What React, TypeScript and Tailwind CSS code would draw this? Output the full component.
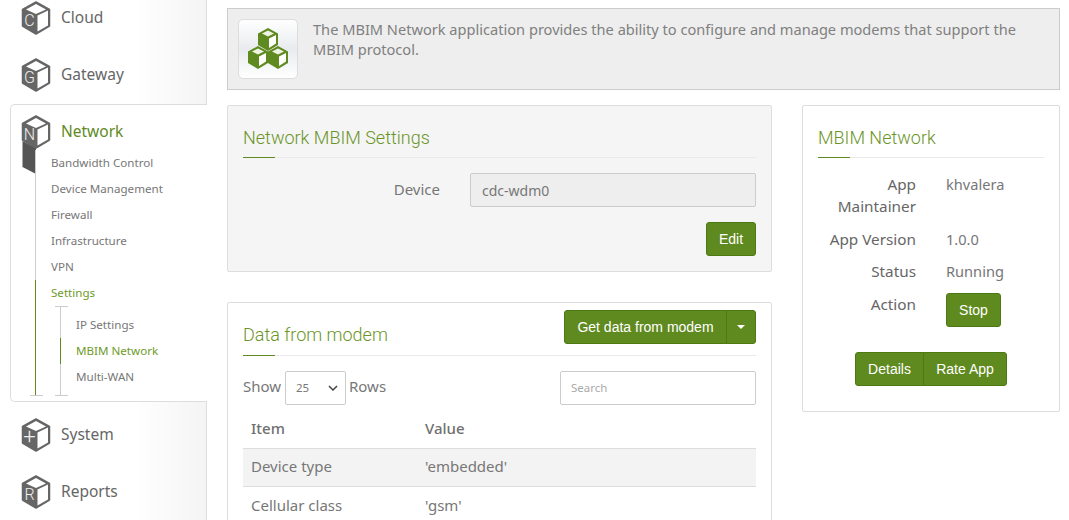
const body = "font-['Noto_Sans',sans-serif]";

function Cube({ letter, tail }: { letter: string; tail?: boolean }) {
    return (
        <svg width="30" height={tail ? 60 : 34} viewBox={tail ? "0 0 30 60" : "0 0 30 34"} className="shrink-0">
            {tail && <path d="M1.5 26 L15 33 L15 59 L1.5 52 Z" fill="#555" />}
            <path d="M15 1 L28.5 8.5 L28.5 25 L15 33 L1.5 25 L1.5 8.5 Z" fill="#666" stroke="#666" strokeWidth="1.5" strokeLinejoin="round" />
            <path d="M15 3 L25 8.5 L15 13 L5 8.5 Z" fill="#fff" />
            <path d="M16.5 14.5 L27 9.5 L27 24.5 L16.5 30.5 Z" fill="#fff" />
            <text x="8.5" y={letter === "+" ? 26 : 25} textAnchor="middle" fontSize={letter === "+" ? 22 : 16} fill="#eee" fontWeight="300" fontFamily="Roboto, sans-serif">
                {letter}
            </text>
        </svg>
    );
}

function MenuItem({ letter, label, className }: { letter: string; label: string; className?: string }) {
    return (
        <div className={`flex items-center gap-[10px] pl-[21px] border-r border-[#ddd] bg-gradient-to-r from-white from-[65%] to-[#f4f4f4] ${className ?? "h-[57px]"}`}>
            <Cube letter={letter} />
            <span className="text-[15.5px] text-[#666]">{label}</span>
        </div>
    );
}

function GreenBtn({ children, className }: { children: React.ReactNode; className?: string }) {
    return (
        <button className={`h-[34px] bg-[#5f8a1f] border border-[#4c7a12] text-white text-[14px] font-['Liberation_Sans',sans-serif] ${className ?? ""}`}>
            {children}
        </button>
    );
}

function CardTitle({ children }: { children: React.ReactNode }) {
    return (
        <div className="relative border-b border-[#eaeaea]">
            <h2 className="font-['Roboto',sans-serif] font-light text-[18px] leading-[26px] text-[#6b9428] pb-[6px]">{children}</h2>
            <div className="absolute left-0 -bottom-px w-8 h-px bg-[#5f8a1f]" />
        </div>
    );
}

function NavLink({ label, active }: { label: string; active?: boolean }) {
    return (
        <div className={`h-[26px] flex items-center -ml-px border-l pl-[15px] text-[11.6px] ${active ? "border-[#5f8a1f] text-[#6e9a2a]" : "border-transparent text-[#777]"}`}>
            {label}
        </div>
    );
}

function Sidebar() {
    return (
        <aside className="w-[207px] shrink-0 -mt-[11px]">
            <MenuItem letter="C" label="Cloud" />
            <MenuItem letter="G" label="Gateway" className="h-[58px]" />
            <div className="ml-[10px] h-[298px] bg-white border border-r-0 border-[#ddd] rounded-l-[5px] pl-[10px] pt-[10px]">
                <div className="flex items-start gap-[10px] h-[34px]">
                    <Cube letter="N" tail />
                    <span className="text-[15.5px] text-[#5f8a1f] mt-[5px]">Network</span>
                </div>
                <div className="relative ml-[14px] border-l border-[#ccc] h-[246px] mt-[1px]">
                    <NavLink label="Bandwidth Control" />
                    <NavLink label="Device Management" />
                    <NavLink label="Firewall" />
                    <NavLink label="Infrastructure" />
                    <NavLink label="VPN" />
                    <div className="-ml-px border-l border-[#5f8a1f] h-[116px]">
                        <div className="h-[26px] flex items-center pl-[15px] text-[11.6px] text-[#6e9a2a]">Settings</div>
                        <div className="relative ml-[24px] h-[90px] border-l border-[#ccc] pt-[6px]">
                            <div className="absolute -left-[6px] top-0 w-[13px] h-px bg-[#ccc]" />
                            <NavLink label="IP Settings" />
                            <NavLink label="MBIM Network" active />
                            <NavLink label="Multi-WAN" />
                            <div className="absolute -left-[6px] bottom-0 w-[13px] h-px bg-[#ccc]" />
                        </div>
                    </div>
                    <div className="absolute -left-[6px] bottom-0 w-[13px] h-px bg-[#ccc]" />
                </div>
            </div>
            <MenuItem letter="+" label="System" className="h-[61px] pt-[4px]" />
            <MenuItem letter="R" label="Reports" className="h-[68px] pb-[10px]" />
        </aside>
    );
}

function AppLogo() {
    const cube = (x: number, y: number) => (
        <g transform={`translate(${x} ${y})`}>
            <path d="M10 0 L20 5.5 L20 17 L10 23 L0 17 L0 5.5 Z" fill="#5f8a1f" />
            <path d="M10 2.5 L16 5.5 L10 8.5 L4 5.5 Z" fill="#eef3e4" />
            <path d="M11 10.5 L18 7 L18 15.5 L11 20 Z" fill="#fff" />
        </g>
    );
    return (
        <div className="w-[60px] h-[60px] shrink-0 rounded-[5px] border border-[#ddd] bg-gradient-to-b from-white via-[#e8ebee] to-white flex items-center justify-center">
            <svg width="42" height="44" viewBox="0 0 42 44">
                {cube(11, 1)}
                {cube(1, 19)}
                {cube(21, 19)}
            </svg>
        </div>
    );
}

export default function App() {
    return (
        <div className={`h-[520px] w-[1069px] overflow-hidden bg-white flex ${body}`}>
            <Sidebar />
            <main className="flex-1 pl-[20px] pr-[9px] pt-[8px]">
                <div className="h-[82px] flex items-center gap-[15px] px-[10px] bg-[#eee] border border-[#ccc]">
                    <AppLogo />
                    <p className="text-[14.6px] leading-[20px] text-[#808080] -mt-[21px]">
                        The MBIM Network application provides the ability to configure and manage modems that support the MBIM protocol.
                    </p>
                </div>
                <div className="flex gap-[30px] mt-[15px] items-start">
                    <div className="w-[545px] shrink-0">
                        <section className="h-[167px] bg-[#f5f5f5] border border-[#ddd] rounded-[2px] px-[15px] pt-[19px]">
                            <CardTitle>Network MBIM Settings</CardTitle>
                            <div className="flex items-center mt-[15px]">
                                <label className="w-[197px] text-right text-[15px] text-[#777] -mt-[2px]">Device</label>
                                <div className="ml-[30px] flex-1 h-[34px] flex items-center bg-[#eee] border border-[#ccc] rounded-[2px] px-[11px] text-[14px] text-[#777]">
                                    cdc-wdm0
                                </div>
                            </div>
                            <div className="flex justify-end mt-[15px]">
                                <GreenBtn className="w-[50px] rounded-[3px]">Edit</GreenBtn>
                            </div>
                        </section>
                        <section className="h-[300px] mt-[30px] bg-white border border-[#ddd] rounded-[2px] px-[15px] pt-[7px]">
                            <div className="relative border-b border-[#eaeaea] h-[46px]">
                                <h2 className="font-['Roboto',sans-serif] font-light text-[18px] leading-[26px] text-[#6b9428] pt-[12px]">Data from modem</h2>
                                <div className="absolute left-0 -bottom-px w-8 h-px bg-[#5f8a1f]" />
                                <div className="absolute right-0 top-0 flex">
                                    <GreenBtn className="w-[163px] rounded-l-[3px]">Get data from modem</GreenBtn>
                                    <GreenBtn className="w-[30px] -ml-px rounded-r-[3px] flex items-center justify-center">
                                        <span className="w-0 h-0 border-x-4 border-x-transparent border-t-4 border-t-white" />
                                    </GreenBtn>
                                </div>
                            </div>
                            <div className="flex items-center justify-between mt-[15px]">
                                <div className="flex items-center gap-[3px] text-[15px] text-[#777]">
                                    <span className="-mt-[3px] w-[39px]">Show</span>
                                    <div className="w-[61px] h-[34px] flex items-center justify-between pl-[10px] pr-[7px] border border-[#ccc] rounded-[2px] text-[11.5px]">
                                        25
                                        <svg width="10" height="6" viewBox="0 0 10 6" fill="none" stroke="#444" strokeWidth="1.5"><path d="M1 1 L5 5 L9 1" /></svg>
                                    </div>
                                    <span className="-mt-[3px]">Rows</span>
                                </div>
                                <div className="w-[196px] h-[34px] flex items-center border border-[#ccc] rounded-[2px] px-[10px] text-[11.5px] text-[#aaa]">Search</div>
                            </div>
                            <table className="w-full mt-[5px] text-[15px] text-[#777] text-left">
                                <thead>
                                    <tr className="h-[38px] border-b border-[#ddd] text-[#707070]">
                                        <th className="w-[182px] pl-[8px] pb-[2px] font-medium">Item</th>
                                        <th className="pb-[2px] font-medium">Value</th>
                                    </tr>
                                </thead>
                                <tbody>
                                    <tr className="h-[38px] bg-[#f3f3f3] border-b border-[#ddd]">
                                        <td className="pl-[8px] pb-[2px]">Device type</td>
                                        <td className="pb-[2px]">'embedded'</td>
                                    </tr>
                                    <tr className="h-[38px]">
                                        <td className="pl-[8px]">Cellular class</td>
                                        <td>'gsm'</td>
                                    </tr>
                                </tbody>
                            </table>
                        </section>
                    </div>
                    <section className="w-[258px] h-[307px] bg-white border border-[#ddd] rounded-[2px] px-[15px] pt-[19px]">
                        <CardTitle>MBIM Network</CardTitle>
                        <dl className="grid grid-cols-[98px_1fr] gap-x-[30px] mt-[15px] text-[14.6px] leading-[22px] text-[#777]">
                            <dt className="text-right text-[15.3px] text-[#666]">App Maintainer</dt>
                            <dd>khvalera</dd>
                            <dt className="text-right text-[15.3px] text-[#666] mt-[11px] whitespace-nowrap">App Version</dt>
                            <dd className="mt-[11px]">1.0.0</dd>
                            <dt className="text-right text-[15.3px] text-[#666] mt-[10px]">Status</dt>
                            <dd className="mt-[10px]">Running</dd>
                            <dt className="text-right text-[15.3px] text-[#666] mt-[11px]">Action</dt>
                            <dd className="mt-[11px]">
                                <GreenBtn className="w-[55px] rounded-[3px]">Stop</GreenBtn>
                            </dd>
                        </dl>
                        <div className="flex justify-center mt-[25px]">
                            <GreenBtn className="w-[69px] rounded-l-[3px]">Details</GreenBtn>
                            <GreenBtn className="w-[84px] -ml-px rounded-r-[3px]">Rate App</GreenBtn>
                        </div>
                    </section>
                </div>
            </main>
        </div>
    );
}
